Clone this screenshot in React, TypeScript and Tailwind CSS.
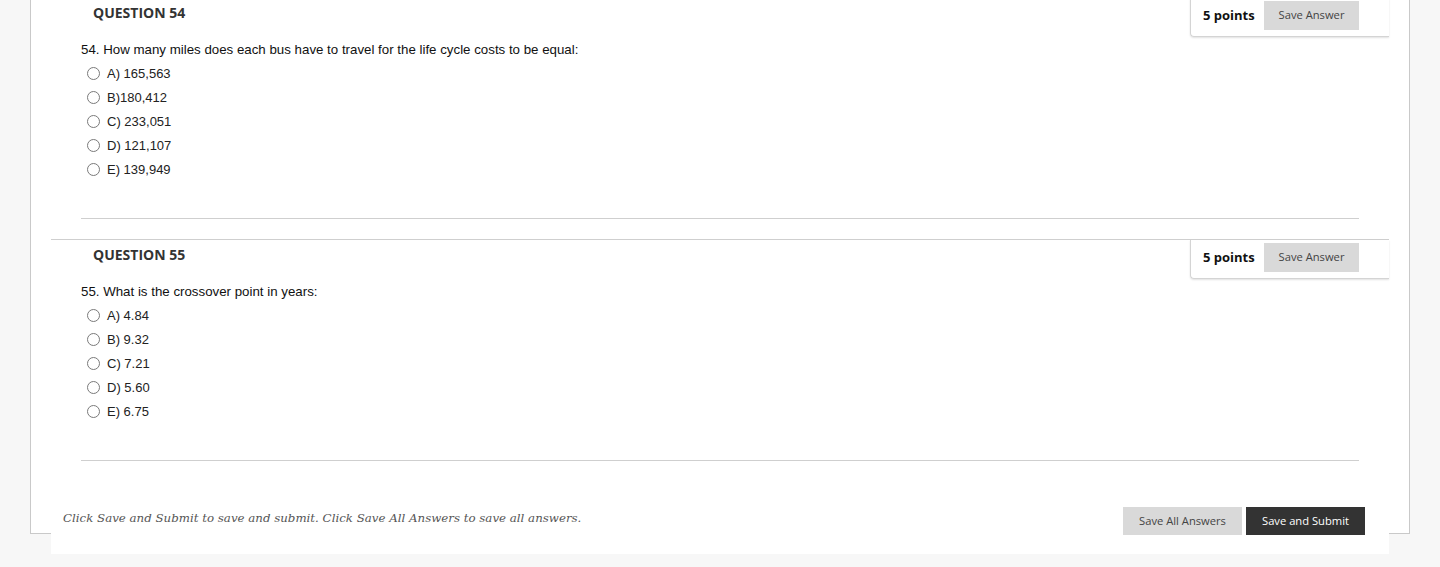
import React from 'react';

type Question = {
  number: number;
  prompt: string;
  options: string[];
  first?: boolean;
};

const questions: Question[] = [
  {
    number: 54,
    prompt: '54. How many miles does each bus have to travel for the life cycle costs to be equal:',
    options: ['A) 165,563', 'B)180,412', 'C) 233,051', 'D) 121,107', 'E) 139,949'],
    first: true,
  },
  {
    number: 55,
    prompt: '55. What is the crossover point in years:',
    options: ['A) 4.84', 'B) 9.32', 'C) 7.21', 'D) 5.60', 'E) 6.75'],
  },
];

const openSans = "font-['Open_Sans',_'Liberation_Sans',_sans-serif]";
const arial = "font-['Liberation_Sans',_Arial,_sans-serif]";

function Radio() {
  return (
    <span className="inline-block w-[13px] h-[13px] rounded-full border border-[#7a7a7a] bg-white shrink-0" />
  );
}

function QuestionBlock({ q }: { q: Question }) {
  return (
    <div className={`border-t border-[#cfcfcf] ${q.first ? '-mt-[3px]' : ''}`}>
      <div className="flex justify-between items-start">
        <h3 className={`${openSans} pl-[42px] pt-[5px] text-[14px] leading-[20px] font-bold text-[#333]`}>
          QUESTION {q.number}
        </h3>
        <div className="w-[199px] flex items-center pl-[12px] pr-[30px] pt-[3px] pb-[6px] border-l border-b border-[#d4d4d4] rounded-bl-[4px] shadow-[0_1px_2px_rgba(0,0,0,0.12)]">
          <span className={`${openSans} text-[13px] font-bold text-[#111] whitespace-nowrap`}>5 points</span>
          <button
            className={`${openSans} ml-auto w-[95px] h-[29px] bg-[#d9d9d9] text-[11.2px] text-[#444]`}
          >
            Save Answer
          </button>
        </div>
      </div>

      <p className={`${arial} mt-[5px] pl-[30px] text-[13.3px] leading-[15px] text-[#111]`}>{q.prompt}</p>

      <ul className="mt-[4px] pl-[36px]">
        {q.options.map((o) => (
          <li key={o} className="h-[24px] flex items-center gap-[7px]">
            <Radio />
            <span className={`${arial} text-[13px] leading-[15px] text-[#222]`}>{o}</span>
          </li>
        ))}
      </ul>

      <div className="mt-[37px] mx-[30px] h-px bg-[#cfcfcf]" />
      <div className="h-[20px]" />
    </div>
  );
}

export default function App() {
  return (
    <div className="min-h-[567px] bg-[#f7f7f7]">
      <div className="ml-[30px] w-[1380px] flex flex-col bg-white border-l border-r border-b border-[#c9c9c9] px-[20px]">
        {questions.map((q) => (
          <QuestionBlock key={q.number} q={q} />
        ))}

        <div className="relative -mb-[21px] bg-white flex items-start justify-between pl-[12px] pr-[24px] pt-[26px] pb-[19px]">
          <p className="font-['DejaVu_Serif',_Georgia,_serif] italic text-[11.8px] leading-[20px] pt-px text-[#555]">
            Click Save and Submit to save and submit. Click Save All Answers to save all answers.
          </p>
          <div className="flex gap-[4px]">
            <button className={`${openSans} w-[119px] h-[28px] bg-[#d9d9d9] text-[11.2px] text-[#444]`}>
              Save All Answers
            </button>
            <button className={`${openSans} w-[119px] h-[28px] bg-[#333333] text-[11.2px] text-white`}>
              Save and Submit
            </button>
          </div>
        </div>
      </div>
    </div>
  );
}
